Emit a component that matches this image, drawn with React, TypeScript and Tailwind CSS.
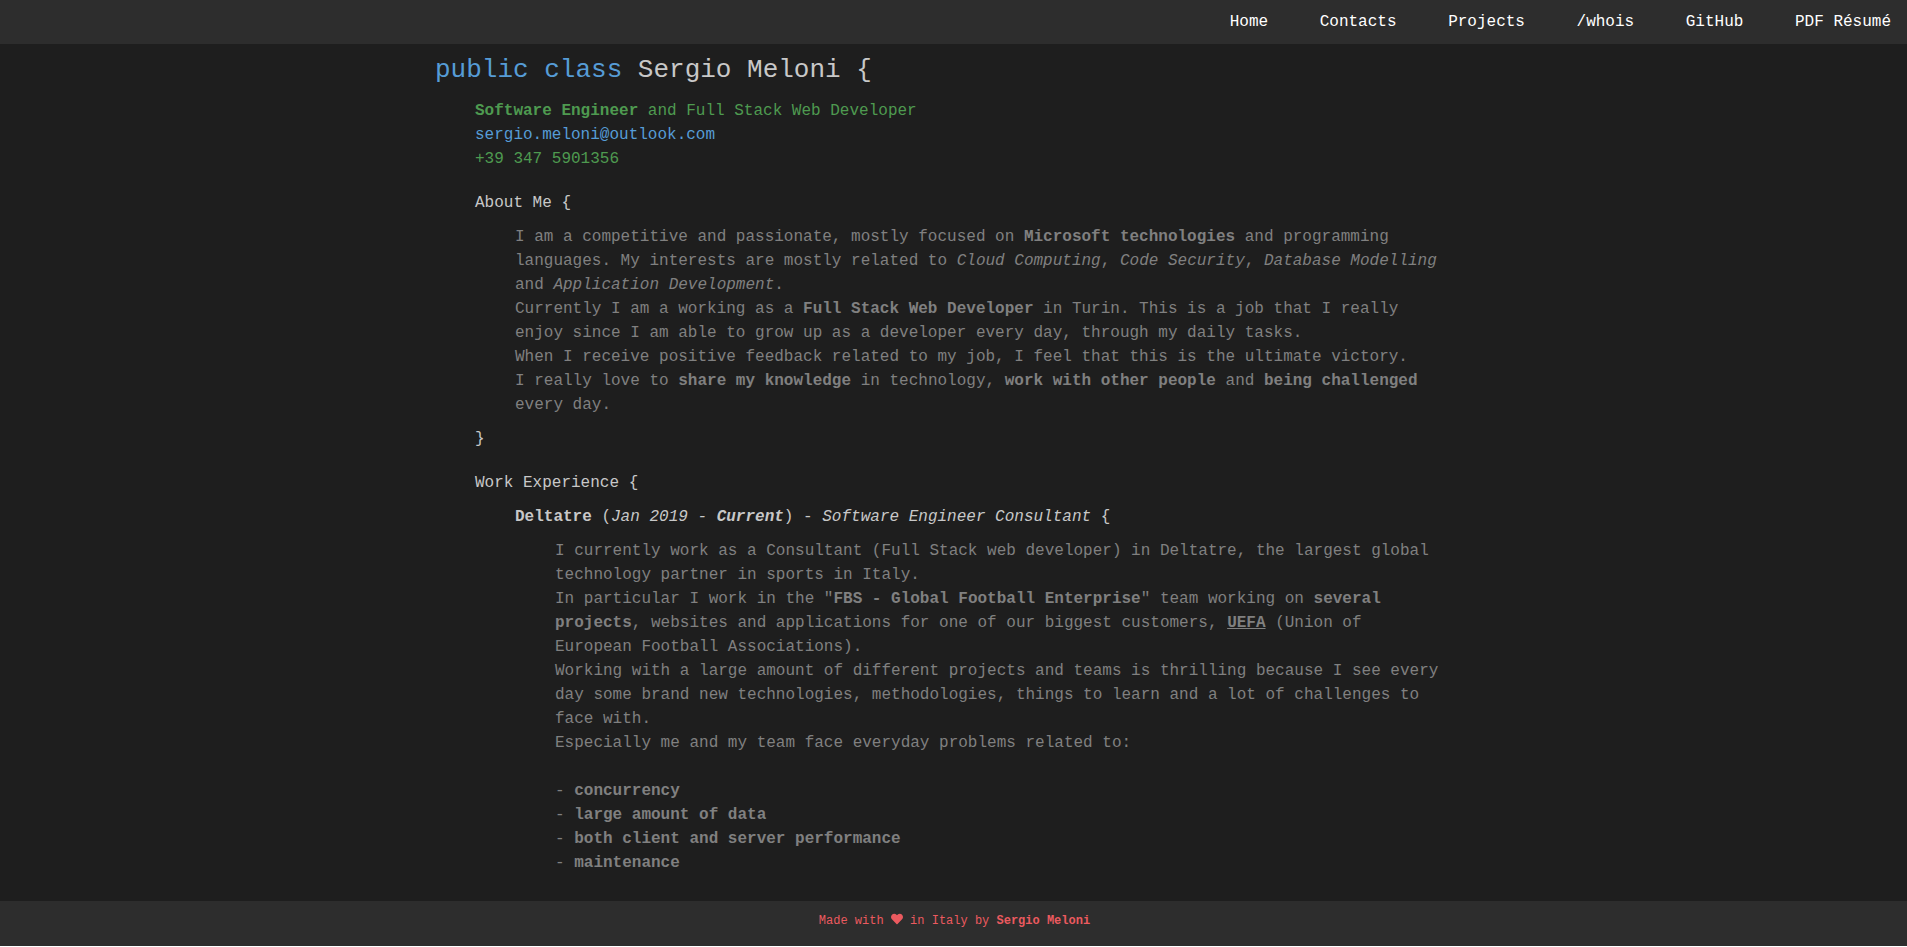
import { Fragment } from "react";
import type { ReactNode } from "react";

const links = ["Home", "Contacts", "Projects", "/whois", "GitHub", "PDF Résumé"];

const challenges = [
  "concurrency",
  "large amount of data",
  "both client and server performance",
  "maintenance",
];

function Block({ title, children }: { title: ReactNode; children: ReactNode }) {
  return (
    <section>
      {title}
      <div className="mt-2.5 pl-10 text-[#808080]">{children}</div>
    </section>
  );
}

function Heart() {
  return (
    <svg viewBox="0 0 512 512" className="inline-block size-3 align-[-1px]" fill="currentColor" aria-hidden="true">
      <path d="M462.3 62.6C407.5 15.9 326 24.3 275.7 76.2L256 96.5l-19.7-20.3C186.1 24.3 104.5 15.9 49.7 62.6c-62.8 53.6-66.1 149.8-9.9 207.9l193.5 199.8c12.5 12.9 32.8 12.9 45.3 0l193.5-199.8c56.3-58.1 53-154.3-9.8-207.9z" />
    </svg>
  );
}

export default function App() {
  return (
    <div className="flex h-[calc(100vh-1px)] flex-col bg-[#1e1e1e] font-['Liberation_Mono',monospace] text-base text-[#c8c8c8]">
      <nav className="h-11 shrink-0 bg-[#2d2d2d] px-4 text-right leading-[44px] text-white">
        {links.map((link) => (
          <Fragment key={link}>
            {" "}
            <a href="#" className="ml-[42px]">
              {link}
            </a>
          </Fragment>
        ))}
      </nav>

      <main className="min-h-0 flex-1 overflow-hidden">
        <div className="mx-auto max-w-[1037px] pt-1.5 pr-7">
          <h1 className="text-[26px] leading-10">
            <span className="text-[#569cd6]">public class</span> Sergio Meloni {"{"}
          </h1>

          <div className="mt-[9px] pl-10">
            <div className="text-[#4e9a50]">
              <p>
                <b>Software Engineer</b> and Full Stack Web Developer
              </p>
              <p>
                <a href="mailto:sergio.meloni@outlook.com" className="text-[#569cd6]">
                  sergio.meloni@outlook.com
                </a>
              </p>
              <p>+39 347 5901356</p>
            </div>

            <div className="mt-5">
              <Block title={<h2>About Me {"{"}</h2>}>
                <p>
                  I am a competitive and passionate, mostly focused on <b>Microsoft technologies</b> and
                  programming languages. My interests are mostly related to <i>Cloud Computing</i>,{" "}
                  <i>Code Security</i>, <i>Database Modelling</i> and <i>Application Development</i>.
                </p>
                <p>
                  Currently I am a working as a <b>Full Stack Web Developer</b> in Turin. This is a job that I
                  really enjoy since I am able to grow up as a developer every day, through my daily tasks.
                </p>
                <p>When I receive positive feedback related to my job, I feel that this is the ultimate victory.</p>
                <p>
                  I really love to <b>share my knowledge</b> in technology, <b>work with other people</b> and{" "}
                  <b>being challenged</b> every day.
                </p>
              </Block>
              <p className="mt-2.5">{"}"}</p>
            </div>

            <div className="mt-5">
              <Block title={<h2>Work Experience {"{"}</h2>}>
                <Block
                  title={
                    <h3 className="text-[#c8c8c8]">
                      <b>Deltatre</b> (
                      <i>
                        Jan 2019 - <b>Current</b>
                      </i>
                      ) - <i>Software Engineer Consultant</i> {"{"}
                    </h3>
                  }
                >
                  <p>
                    I currently work as a Consultant (Full Stack web developer) in Deltatre, the largest global
                    technology partner in sports in Italy.
                  </p>
                  <p>
                    In particular I work in the "<b>FBS - Global Football Enterprise</b>" team working on{" "}
                    <b>several projects</b>, websites and applications for one of our biggest customers,{" "}
                    <a href="#" className="font-bold underline">
                      UEFA
                    </a>{" "}
                    (Union of European Football Associations).
                  </p>
                  <p>
                    Working with a large amount of different projects and teams is thrilling because I see every
                    day some brand new technologies, methodologies, things to learn and a lot of challenges to face
                    with.
                  </p>
                  <p>Especially me and my team face everyday problems related to:</p>
                  <ul className="mt-6">
                    {challenges.map((item) => (
                      <li key={item}>
                        - <b>{item}</b>
                      </li>
                    ))}
                  </ul>
                </Block>
              </Block>
            </div>
          </div>
        </div>
      </main>

      <footer className="h-[45px] shrink-0 bg-[#2d2d2d] pt-[11px] pl-0.5 text-center text-xs leading-[18px] text-[#eb5a5f]">
        Made with <Heart /> in Italy by <b>Sergio Meloni</b>
      </footer>
    </div>
  );
}
